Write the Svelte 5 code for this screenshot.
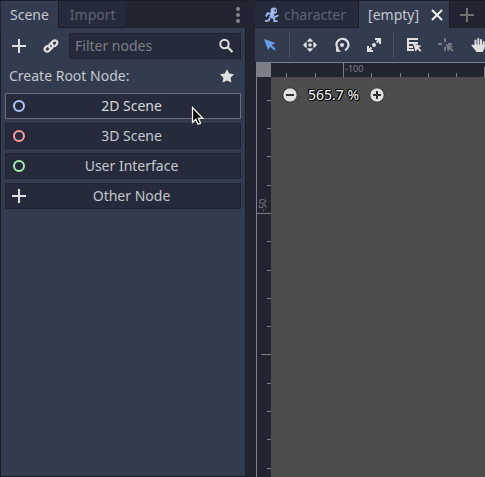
<script>
  const roots = [
    { label: '2D Scene', color: '#b4c4ff' },
    { label: '3D Scene', color: '#fc9c9c' },
    { label: 'User Interface', color: '#a5efac' },
    { label: 'Other Node', color: null }
  ];
  let filter = $state('');

  const step = 28.28;
  const ticks = (origin) =>
    Array.from({ length: 80 }, (_, i) => i - 10).map((n) => ({
      at: Math.round(origin + n * step) + 0.5,
      size: n % 10 === 0 ? 14 : n % 5 === 0 ? 10 : 4
    }));
  const cols = ticks(72);
  const rows = ticks(136);
</script>

{#snippet plus()}
  <svg width="16" height="16" viewBox="0 0 16 16" aria-hidden="true">
    <path d="M8 1v14M1 8h14" stroke="#e0e0e0" stroke-width="2" fill="none" />
  </svg>
{/snippet}

<div class="editor">
  <aside class="dock">
    <div class="tabs" role="tablist">
      <button class="tab active" role="tab" aria-selected="true">Scene</button>
      <button class="tab" role="tab" aria-selected="false">Import</button>
      <button class="dots" aria-label="Dock options">
        <svg width="6" height="16" viewBox="0 0 6 16">
          <g fill="#83868e"><circle cx="3" cy="2" r="2" /><circle cx="3" cy="8" r="2" /><circle cx="3" cy="14" r="2" /></g>
        </svg>
      </button>
    </div>
    <div class="panel">
      <div class="tools">
        <button class="icon" aria-label="Add node">{@render plus()}</button>
        <button class="icon" aria-label="Instance scene">
          <svg width="16" height="16" viewBox="0 0 16 16">
            <g fill="none" stroke="#e0e0e0" stroke-width="2.200" stroke-linecap="round">
              <path d="M7 10C5.700 8.800 5.800 7.200 7 6l2.800-2.800c1.300-1.300 2.900-1.100 3.800-.2 1 1 1 2.500-.1 3.600L12 8" />
              <path d="M9 6c1.300 1.200 1.200 2.800 0 4l-2.800 2.800c-1.300 1.300-2.900 1.100-3.800.2-1-1-1-2.500.1-3.600L4 8" />
            </g>
          </svg>
        </button>
        <label class="search">
          <input type="text" placeholder="Filter nodes" aria-label="Filter nodes" bind:value={filter} />
          <svg width="16" height="16" viewBox="0 0 16 16" aria-hidden="true">
            <circle cx="6.500" cy="6" r="4.200" fill="none" stroke="#e0e0e0" stroke-width="2" />
            <path d="M9.500 9l5 5" stroke="#e0e0e0" stroke-width="2.200" />
          </svg>
        </label>
      </div>
      <div class="heading">
        <span>Create Root Node:</span>
        <button class="star" aria-label="Favorites">
          <svg width="16" height="16" viewBox="0 0 16 16">
            <path d="M8 1.200l2.200 4.300 4.800.7-3.400 3.500.8 4.900L8 12.400l-4.400 2.200.8-4.900L1 6.200l4.800-.7z" fill="#e0e0e0" />
          </svg>
        </button>
      </div>
      <div class="roots">
        {#each roots as root, i}
          <button class="root" class:hovered={i === 0}>
            {#if root.color}
              <svg width="16" height="16" viewBox="0 0 16 16" aria-hidden="true">
                <circle cx="8" cy="8" r="5" fill="none" stroke={root.color} stroke-width="2" />
              </svg>
            {:else}
              {@render plus()}
            {/if}
            <span>{root.label}</span>
            {#if i === 0}
              <svg class="pointer" width="14" height="20" viewBox="0 0 14 20" aria-hidden="true">
                <path d="M1.500 1.500v15l3.300-3.200 2.200 5 2.600-1.200-2.200-4.800h4.500z" fill="#111" stroke="#fff" stroke-width="1.200" />
              </svg>
            {/if}
          </button>
        {/each}
      </div>
    </div>
  </aside>

  <main class="workspace">
    <div class="tabs" role="tablist">
      <button class="tab scene" role="tab" aria-selected="false">
        <svg width="16" height="16" viewBox="0 0 16 16" aria-hidden="true">
          <circle cx="9.800" cy="3.800" r="3.200" fill="#a5b7f3" />
          <g fill="none" stroke="#a5b7f3" stroke-width="1.800">
            <path d="M8.500 6L6.800 10.800" stroke-width="3.200" />
            <path d="M7.500 6.500H3.500L2 9.500M8.500 8l2.500 2 3.500-1.700" />
            <path d="M7.500 10.500l2.800 1v2.700h3.200M6 10.500l-1.200 3-3.800.7" />
          </g>
          <path d="M10.500 2.500H12v2h-1.500z" fill="#262b3b" />
        </svg>
        <span>character</span>
      </button>
      <div class="tab active open" role="tab" aria-selected="true" tabindex="0">
        <span>[empty]</span>
        <button class="close" aria-label="Close tab">
          <svg width="16" height="16" viewBox="0 0 16 16">
            <path d="M3 3l10 10M13 3L3 13" stroke="#f2f2f2" stroke-width="2" />
          </svg>
        </button>
      </div>
      <button class="new" aria-label="New scene tab">
        <svg width="16" height="16" viewBox="0 0 16 16"><path d="M8 1v14M1 8h14" stroke="#6f716f" stroke-width="2" /></svg>
      </button>
    </div>

    <div class="toolbar">
      <button class="tool" aria-label="Select mode">
        <svg width="16" height="16" viewBox="0 0 16 16">
          <path d="M2 2l4.200 11.300 2-3.700 4 4 1.500-1.500-4-4 3.800-2z" fill="#699ce8" />
        </svg>
      </button>
      <i class="rule"></i>
      <button class="tool" aria-label="Move mode">
        <svg width="16" height="16" viewBox="0 0 16 16" fill="#e0e0e0">
          <path d="M8 1L5.300 3.700v1h5.400v-1zM8 15l-2.700-2.700v-1h5.400v1zM1 8l2.700-2.700h1v5.400h-1zM15 8l-2.700-2.700h-1v5.400h1z" /><circle cx="8" cy="8" r="1.800" />
        </svg>
      </button>
      <button class="tool" aria-label="Rotate mode">
        <svg width="16" height="16" viewBox="0 0 16 16">
          <path d="M4.200 12A6 6 0 1 1 11 13.200" fill="none" stroke="#e0e0e0" stroke-width="2.200" />
          <path d="M2 9.500v5.200h5.200z" fill="#e0e0e0" /><circle cx="8" cy="8" r="2" fill="#e0e0e0" />
        </svg>
      </button>
      <button class="tool" aria-label="Scale mode">
        <svg width="16" height="16" viewBox="0 0 16 16" fill="#e0e0e0">
          <path d="M9 1h6v6h-2V4.500L11.200 6.200 9.800 4.800 11.500 3H9zM1 9h2v2.500l1.800-1.700 1.400 1.400L4.500 13H7v2H1z" /><circle cx="8" cy="8" r="2" />
        </svg>
      </button>
      <i class="rule"></i>
      <button class="tool" aria-label="List selectable nodes">
        <svg width="16" height="16" viewBox="0 0 16 16" fill="#e0e0e0">
          <path d="M1 1h11v2H3v2h9v2H3v2h4v2H3v1h5v2H1z" />
          <path d="M7 6.500l2.700 8.200 1.700-2.700 2.800 2.800 1.300-1.300-2.800-2.800L15.500 9z" />
        </svg>
      </button>
      <button class="tool" aria-label="Change pivot">
        <svg width="16" height="16" viewBox="0 0 16 16" fill="#777b85">
          <path d="M6 1h2v4H6zM0 6h4v2H0zM10 6h4v2h-4zM6 10h2v4H6z" />
          <path d="M7.500 7l2.500 7.500 1.600-2.600 2.800 2.800 1.200-1.200-2.800-2.800 2.700-1.200z" />
        </svg>
      </button>
      <button class="tool" aria-label="Pan mode">
        <svg width="16" height="16" viewBox="0 0 16 16">
          <g stroke="#e0e0e0" stroke-width="2" stroke-linecap="round" fill="none"><path d="M5.500 9V3.500M8.300 8V2M11 8V3M13.700 9V5M5.500 11L2.500 8.500" /></g>
          <path d="M4.500 7.500h10.200V11l-2 4H6.500L2.500 9.500z" fill="#e0e0e0" />
        </svg>
      </button>
    </div>

    <div class="canvas">
      <div class="corner"></div>
      <svg class="ruler top" aria-hidden="true">
        {#each cols as t}
          <line x1={t.at} x2={t.at} y1={14 - t.size} y2="14" />
        {/each}
        <text x="74" y="9">-100</text>
      </svg>
      <svg class="ruler side" aria-hidden="true">
        {#each rows as t}
          <line x1={14 - t.size} x2="14" y1={t.at} y2={t.at} />
        {/each}
        <text transform="translate(9 135) rotate(-90)">-50</text>
      </svg>
      <section class="view" aria-label="Viewport">
        <button class="zoom" aria-label="Zoom out">
          <svg width="16" height="16" viewBox="0 0 16 16"><circle cx="8" cy="8" r="7.200" fill="#e0e0e0" stroke="#303030" /><path d="M4 8h8" stroke="#303030" stroke-width="2" /></svg>
        </button>
        <button class="percent">565.7 %</button>
        <button class="zoom" aria-label="Zoom in">
          <svg width="16" height="16" viewBox="0 0 16 16"><circle cx="8" cy="8" r="7.200" fill="#e0e0e0" stroke="#303030" /><path d="M4 8h8M8 4v8" stroke="#303030" stroke-width="2" /></svg>
        </button>
      </section>
    </div>
  </main>
</div>

<style>
  :global(body) {
    background: #202531;
  }
  .editor {
    display: grid;
    grid-template-columns: 246px minmax(0, 1fr);
    column-gap: 9px;
    height: 100vh;
    overflow: hidden;
    color: #c5c8cd;
    font: 14px/20px 'Noto Sans', sans-serif;
  }
  button, input {
    box-sizing: border-box;
    margin: 0;
    padding: 0;
    border: 0;
    background: none;
    color: inherit;
    font: inherit;
  }
  svg {
    display: block;
    flex: none;
  }
  .dock, .workspace {
    display: flex;
    flex-direction: column;
    min-width: 0;
  }
  .tabs {
    display: flex;
    flex: none;
    height: 28px;
    box-sizing: border-box;
    border-top: 1px solid #191d27;
  }
  .dock .tabs {
    padding-left: 1px;
  }
  .tab {
    display: flex;
    align-items: center;
    box-sizing: border-box;
    padding: 0 9px 0 11px;
    background: #262b3b;
    color: #5f636f;
    box-shadow: inset 0 -1px #191d27;
    white-space: nowrap;
  }
  .tab.active {
    padding: 0 9px;
    background: #333b4f;
    color: #c5c8cd;
    box-shadow: none;
    border-right: 1px solid #191d27;
  }
  .dots {
    margin-left: auto;
    padding: 0 5px;
  }
  .panel {
    flex: 1;
    display: flex;
    flex-direction: column;
    padding: 5px 4px;
    background: #333b4f;
    border: 1px solid #191d27;
    border-top: 0;
  }
  .tools {
    display: flex;
    align-items: center;
    gap: 4px;
  }
  .icon {
    display: grid;
    place-items: center;
    width: 28px;
    height: 26px;
  }
  .search {
    display: flex;
    flex: 1;
    align-items: center;
    min-width: 0;
    height: 24px;
    padding: 0 6px 0 5px;
    background: #262b3b;
    border: 1px solid #1f2431;
  }
  input {
    flex: 1;
    min-width: 0;
    outline: 0;
  }
  input::placeholder {
    color: #7b7e87;
    opacity: 1;
  }
  .heading {
    display: flex;
    align-items: center;
    justify-content: space-between;
    height: 34px;
    padding: 0 6px 0 4px;
  }
  .roots {
    display: grid;
    gap: 4px;
  }
  .root {
    position: relative;
    display: flex;
    align-items: center;
    height: 26px;
    padding: 0 4px 0 5px;
    background: #262b3b;
    border: 1px solid #1f2431;
  }
  .root.hovered {
    border-color: #6a6f7d;
    color: #d6d7da;
  }
  .root span {
    flex: 1;
  }
  .pointer {
    position: absolute;
    right: 35px;
    top: 12px;
    z-index: 1;
  }
  .tab.scene {
    gap: 4px;
    padding: 0 12px 0 9px;
    border-right: 1px solid #191d27;
  }
  .tab.active.open {
    gap: 10px;
    padding: 0 4px 0 9px;
  }
  .new {
    padding: 0 9px;
  }
  .toolbar {
    display: flex;
    flex: none;
    align-items: center;
    gap: 4px;
    height: 34px;
    padding-left: 1px;
    background: #333b4f;
  }
  .tool {
    display: grid;
    flex: none;
    place-items: center;
    width: 28px;
    height: 28px;
  }
  .rule {
    flex: none;
    width: 1px;
    height: 26px;
    margin: 0 2px 0 1px;
    background: #4b5263;
  }
  .canvas {
    flex: 1;
    display: grid;
    grid-template: 14px minmax(0, 1fr) / 14px minmax(0, 1fr);
    margin-left: 1px;
    border-top: 1px solid #7c8089;
    border-left: 1px solid #7c8089;
  }
  .corner {
    background: #7c7e88;
  }
  .ruler {
    width: 100%;
    height: 100%;
    overflow: hidden;
  }
  .ruler line {
    stroke: #7c7e88;
  }
  .ruler text {
    fill: #7c7e88;
    font-size: 9px;
  }
  .view {
    display: flex;
    align-items: flex-start;
    gap: 10px;
    padding: 8px 11px;
    background: #4d4d4d;
  }
  .zoom {
    padding: 2px 0;
  }
  .percent {
    color: #fff;
    text-shadow: 1px 0 #000, -1px 0 #000, 0 1px #000, 0 -1px #000, 1px 1px #000, -1px -1px #000;
  }
</style>
